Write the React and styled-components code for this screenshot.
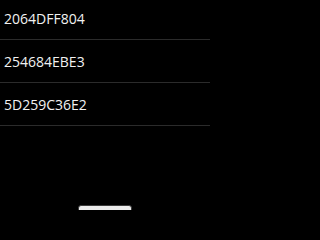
import styled, { createGlobalStyle } from "styled-components";

const GlobalStyle = createGlobalStyle`
  html, body {
    margin: 0;
    padding: 0;
    background: #000;
  }
`;

const Screen = styled.div`
  width: 210px;
  height: 210px;
  display: flex;
  flex-direction: column;
  overflow: hidden;
  background: #000;
  font-family: "Open Sans", "Noto Sans", sans-serif;
`;

const List = styled.ul`
  list-style: none;
  margin: -3px 0 0;
  padding: 0;
`;

const Row = styled.li`
  height: 42px;
  display: flex;
  align-items: center;
  padding: 0 4px;
  border-bottom: 1px solid #2b2b2b;
  color: #f2f2f2;
  font-size: 14px;
`;

const Spacer = styled.div`
  flex: 1;
`;

const ButtonBar = styled.div`
  height: 5px;
  flex-shrink: 0;
  display: flex;
  justify-content: center;
`;

const MenuButton = styled.button`
  width: 54px;
  height: 30px;
  flex-shrink: 0;
  padding: 0;
  background: #ececec;
  border: 1px solid #3a3a3a;
  border-radius: 3px;
`;

const devices = ["2064DFF804", "254684EBE3", "5D259C36E2"];

function App() {
  return (
    <>
      <GlobalStyle />
      <Screen>
        <List>
          {devices.map((id) => (
            <Row key={id}>{id}</Row>
          ))}
        </List>
        <Spacer />
        <ButtonBar>
          <MenuButton aria-label="menu" />
        </ButtonBar>
      </Screen>
    </>
  );
}

export default App;
